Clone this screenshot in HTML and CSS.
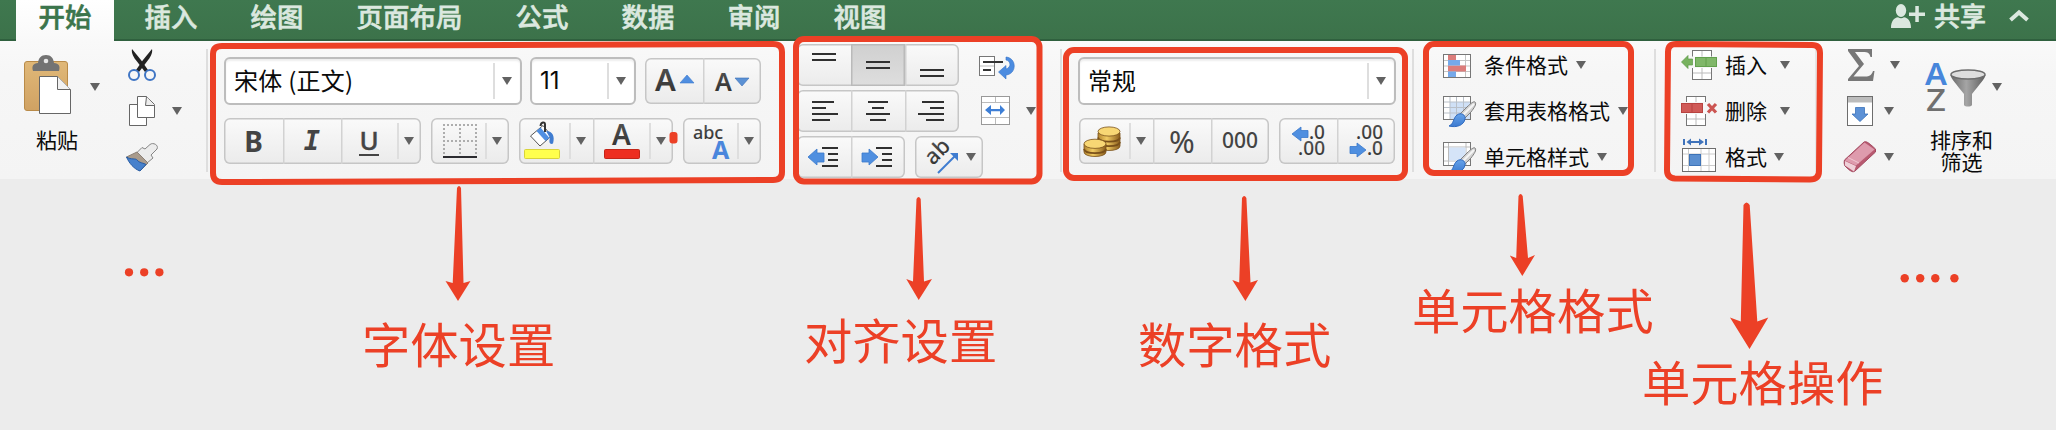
FILE: index.html
```html
<!DOCTYPE html>
<html lang="zh-CN">
<head>
<meta charset="utf-8">
<title>开始</title>
<link rel="stylesheet" href="styles.css">
</head>
<body>
<svg class="defs" width="0" height="0">
  <defs>
    <linearGradient id="gold" x1="0" x2="1" y1="0" y2="0"><stop offset="0" stop-color="#b3852f"/><stop offset=".4" stop-color="#f1cb62"/><stop offset="1" stop-color="#8a5d1c"/></linearGradient>
    <linearGradient id="wood" x1="0" x2="0" y1="0" y2="1"><stop offset="0" stop-color="#e0b878"/><stop offset="1" stop-color="#d0a263"/></linearGradient>
    <linearGradient id="steel" x1="0" x2="1" y1="0" y2="0"><stop offset="0" stop-color="#696969"/><stop offset=".45" stop-color="#a5a5a5"/><stop offset="1" stop-color="#5e5e5e"/></linearGradient>
    <linearGradient id="blue" x1="0" x2="0" y1="0" y2="1"><stop offset="0" stop-color="#66a3ea"/><stop offset="1" stop-color="#3c7ad0"/></linearGradient>
    <linearGradient id="dark" x1="0" x2="0" y1="0" y2="1"><stop offset="0" stop-color="#5a5a5a"/><stop offset="1" stop-color="#2c2c2c"/></linearGradient>
    <symbol id="caret" viewBox="0 0 10 8"><path d="M0 0H10L5 8Z" fill="#626262"/></symbol>
    <symbol id="brush" viewBox="0 0 30 28">
      <path d="M28 2C30 4 27 8 24 12L18 18L13 14L20 7C24 3 27 1 28 2Z" fill="#d2d2d2" stroke="#808080"/>
      <path d="M27 4L16 15" stroke="#f5f5f5" stroke-width="2"/>
      <path d="M10 15C14 12 19 15 18 19C17 25 10 28 2 26C7 24 6 18 10 15Z" fill="url(#blue)" stroke="#2f6abf"/>
    </symbol>
  </defs>
</svg>

<header class="titlebar">
  <nav class="tabs">
    <span class="tab active">开始</span>
    <span class="tab">插入</span>
    <span class="tab">绘图</span>
    <span class="tab">页面布局</span>
    <span class="tab">公式</span>
    <span class="tab">数据</span>
    <span class="tab">审阅</span>
    <span class="tab">视图</span>
  </nav>
  <div class="share">
    <svg width="35" height="26" viewBox="1892 3 35 26" fill="#dbe8df"><ellipse cx="1902" cy="10.500" rx="5.200" ry="6.500"/><path d="M1892 28C1892 21 1895 18 1899 17.300C1901 18.500 1903 18.500 1905 17.300C1909 18 1912 21 1912 28Z"/><path d="M1910 12.500H1916.300V6H1919.800V12.500H1926V16H1919.800V22H1916.300V16H1910Z"/></svg>
    <span class="share-text">共享</span>
    <svg class="chevron" width="22" height="16" viewBox="0 0 22 16"><path d="M2.500 12L11 4.500L19.500 12" fill="none" stroke="#dbe8df" stroke-width="4"/></svg>
  </div>
</header>

<main class="ribbon">
  <section class="clipboard">
    <div class="paste">
      <div class="paste-row">
        <svg width="48" height="60" viewBox="24 55 48 60">
          <rect x="24.500" y="61.500" width="43" height="49" rx="2.500" fill="url(#wood)" stroke="#b98b49"/>
          <path d="M33 71C31.500 66 33 63.500 38 63C38.500 58 41 55 46 55S53.500 58 54 63C59 63.500 60.500 66 59 71Z" fill="#737373"/><circle cx="46" cy="61" r="2.300" fill="#e8e8e8"/>
          <path d="M39.500 76.500H57.500L70.500 89.500V113.500H39.500Z" fill="#fff" stroke="#666"/><path d="M57.500 76.500V89.500H70.500" fill="#f1f1f1" stroke="#666"/>
        </svg>
        <svg class="caret"><use href="#caret"/></svg>
      </div>
      <div class="big-label">粘贴</div>
    </div>
    <div class="stack">
      <div class="line"><svg width="34" height="46" viewBox="126 42 34 46"><path d="M132 49C131 53 134 58 137 61.500L145 72L148 70L141 60Z" fill="#222"/><path d="M152 49C153 53 150 58 147 61.500L139 72L136 70L143 60Z" fill="#222"/><circle cx="134" cy="75" r="5" fill="#f7f7f7" stroke="#3f75c4" stroke-width="2"/><circle cx="150" cy="75" r="5" fill="#f7f7f7" stroke="#3f75c4" stroke-width="2"/></svg></div>
      <div class="line"><svg width="46" height="46" viewBox="126 88 46 46" fill="#fff" stroke="#666"><path d="M129.500 104.500H146.500V125.500H129.500Z"/><path d="M137.500 96.500H146.500L154.500 104.500V117.500H137.500Z"/><path d="M146.500 96.500L145.500 105.500L154.500 105.500" fill="#eee"/></svg><svg class="caret"><use href="#caret"/></svg></div>
      <div class="line"><svg width="34" height="46" viewBox="126 134 34 46"><path d="M145 149L150 144.500C153 142 159 145 157 149L151 155L153 158L147 163L137 152.500L142 147.500Z" fill="#ececec" stroke="#858585"/><path d="M137 152L148 163L140 171L126.500 157Z" fill="#a99b8c" stroke="#8b8077"/><path d="M126.500 157C131 160 136 158 137 160C139 163 144 163 146 164.500L140 171C134 169 129 163 126.500 157Z" fill="#4781cc" stroke="#285ca3"/></svg></div>
    </div>
  </section>
  <i class="sep"></i>

  <section class="controls font">
    <div class="row top">
      <div class="select family"><span>宋体 (正文)</span><b class="drop"><svg class="caret"><use href="#caret"/></svg></b></div>
      <div class="select size"><span>11</span><b class="drop"><svg class="caret"><use href="#caret"/></svg></b></div>
      <div class="buttons grow">
        <div class="cell w58"><svg width="58" height="46" viewBox="645 58 58 46"><text x="655" y="90.500" class="glyph" font-size="31" font-weight="600">A</text><path d="M680 83H694L687 75Z" fill="#4f8ee0" stroke="#3b78cc" stroke-width=".6"/></svg></div>
        <div class="cell w58"><svg width="58" height="46" viewBox="703 58 58 46"><text x="715" y="90.500" class="glyph" font-size="25" font-weight="600">A</text><path d="M735 78H749L742 86Z" fill="#5b91d4" stroke="#3b6fb6" stroke-width=".6"/></svg></div>
      </div>
    </div>
    <div class="row">
      <div class="buttons">
        <div class="cell w59 bold">B</div>
        <div class="cell w58 italic">I</div>
        <div class="cell w56"><span class="under">U</span></div><b class="drop"><svg class="caret"><use href="#caret"/></svg></b>
      </div>
      <div class="buttons">
        <div class="cell w54"><svg width="54" height="46" viewBox="431 118 54 46"><path d="M443 125H478M443 141H478M444 124V155M460 124V155M476 124V155" fill="none" stroke="#adadad" stroke-width="2" stroke-dasharray="2 2"/><path d="M443 157H477" stroke="#2b2b30" stroke-width="2"/></svg></div><b class="drop"><svg class="caret"><use href="#caret"/></svg></b>
      </div>
      <div class="buttons">
        <div class="cell w50"><svg width="50" height="46" viewBox="519 118 50 46"><path d="M530.500 136L543 125.500L551.500 136L540 146Z" fill="#fff" stroke="#555"/><path d="M536.500 131L540.500 127.500L549.500 138L545.500 141Z" fill="#4f8fe2"/><path d="M545 132V124.500C545 121.500 541 121.500 540.500 126" fill="none" stroke="#333" stroke-width="2"/><path d="M546 131C553 131 555 137 553 143.500C550 145 548.500 142 550 138Z" fill="#3f7cd0"/><rect x="524.500" y="149.500" width="35" height="9" rx="1" fill="#ffff4d" stroke="#d8d33c"/></svg></div><b class="drop"><svg class="caret"><use href="#caret"/></svg></b>
        <div class="cell w56 lined"><svg width="56" height="46" viewBox="593 118 56 46"><text x="612" y="145" class="glyph" font-size="28" font-weight="600">A</text><rect x="604.500" y="149.500" width="35" height="9" rx="1" fill="#ed2e20" stroke="#c22519"/></svg></div><b class="drop"><svg class="caret"><use href="#caret"/></svg></b>
      </div>
      <div class="buttons">
        <div class="cell w54"><svg width="54" height="46" viewBox="683 118 54 46"><text x="693" y="139" class="glyph" font-size="18" font-weight="500" textLength="30">abc</text><text x="712" y="159" class="sans" font-size="25" font-weight="700" fill="#4a86dc">A</text></svg></div><b class="drop"><svg class="caret"><use href="#caret"/></svg></b>
      </div>
    </div>
  </section>

  <section class="align">
    <div class="row">
      <div class="buttons low">
        <div class="cell w54"><svg class="bars" width="54" height="42" viewBox="797 44 54 42"><path d="M812 54H836M812 60H836"/></svg></div>
        <div class="cell w54 pressed"><svg class="bars" width="54" height="42" viewBox="851 44 54 42"><path d="M866 62H890M866 68H890"/></svg></div>
        <div class="cell w54"><svg class="bars" width="54" height="42" viewBox="905 44 54 42"><path d="M920 70H944M920 76H944"/></svg></div>
      </div>
      <svg width="60" height="42" viewBox="969 44 60 42"><rect x="979.500" y="56.500" width="15" height="19" fill="#fff" stroke="#777"/><path d="M980 66H994" stroke="#bbb"/><path d="M983 62H1003M983 70H991" stroke="#333" stroke-width="2"/><path d="M1006 57C1017 58 1017 74 1006 75V79L998.500 72L1006 65.500V69C1011.500 67.500 1011 61 1006 60Z" fill="#4c8ce0" stroke="#3673c8" stroke-width=".6"/></svg>
    </div>
    <div class="row">
      <div class="buttons low">
        <div class="cell w54"><svg class="bars" width="54" height="42" viewBox="797 90 54 42"><path d="M812 102H834M812 108H826M812 114H838M812 120H830"/></svg></div>
        <div class="cell w54"><svg class="bars" width="54" height="42" viewBox="851 90 54 42"><path d="M868 102H888M872 108H884M866 114H890M870 120H886"/></svg></div>
        <div class="cell w54"><svg class="bars" width="54" height="42" viewBox="905 90 54 42"><path d="M922 102H944M930 108H944M918 114H944M926 120H944"/></svg></div>
      </div>
      <svg width="57" height="42" viewBox="969 90 57 42"><rect x="981.500" y="96.500" width="28" height="28" fill="#fff" stroke="#999"/><path d="M982 102.500H1009M982 117.500H1009M995.500 97V102M995.500 118V124" stroke="#bbb"/><path d="M985 110L991 105V109H1000V105L1005 110L1000 115V111.200H991V115Z" fill="#3e7fd6"/></svg>
      <svg class="caret"><use href="#caret"/></svg>
    </div>
    <div class="row">
      <div class="buttons low">
        <div class="cell w54"><svg class="bars" width="54" height="42" viewBox="797 136 54 42"><path d="M822 148H838M828 154H838M828 160H838M822 166H838"/><path class="arrow" d="M808 157L817 149V153H824V162H817V165Z"/></svg></div>
        <div class="cell w54"><svg class="bars" width="54" height="42" viewBox="851 136 54 42"><path d="M876 148H892M882 154H892M882 160H892M876 166H892"/><path class="arrow" d="M878 157L869 149V153H862V162H869V165Z"/></svg></div>
      </div>
      <div class="buttons low angle">
        <svg width="48" height="42" viewBox="915 136 48 42"><text transform="translate(933 166) rotate(-45)" class="glyph" font-size="22" font-weight="500">ab</text><path d="M938 173L955 156" stroke="#3f7cd0" stroke-width="2"/><path d="M950 153H958V161Z" fill="#3f7cd0"/></svg>
        <svg class="caret"><use href="#caret"/></svg>
      </div>
    </div>
  </section>
  <i class="sep"></i>

  <section class="controls number">
    <div class="row top">
      <div class="select format"><span>常规</span><b class="drop"><svg class="caret"><use href="#caret"/></svg></b></div>
    </div>
    <div class="row inset">
      <div class="buttons">
        <div class="cell w50"><svg width="50" height="46" viewBox="1079 118 50 46">
          <g stroke="#79501a" stroke-width=".8"><path d="M1098 133V146C1098 152 1120 152 1120 146V133Z" fill="url(#gold)"/><path d="M1098 137.500C1099 143 1119 143 1120 137.500M1098 142C1099 147.500 1119 147.500 1120 142" fill="none" stroke-width="1.800"/><ellipse cx="1109" cy="131.500" rx="11" ry="4.600" fill="#f8d774"/><path d="M1084 144V152C1084 158 1106 158 1106 152V144Z" fill="url(#gold)"/><path d="M1084 149C1085 154.500 1105 154.500 1106 149" fill="none" stroke-width="1.800"/><ellipse cx="1095" cy="143.800" rx="11" ry="4.600" fill="#f8d774"/></g></svg></div><b class="drop"><svg class="caret"><use href="#caret"/></svg></b>
        <div class="cell w58 lined percent">%</div>
        <div class="cell w58 zeros">000</div>
      </div>
      <div class="buttons">
        <div class="cell w58"><svg width="58" height="46" viewBox="1279 118 58 46"><text x="1325" y="138.500" text-anchor="end" class="glyph decimals">.0</text><text x="1325" y="155" text-anchor="end" class="glyph decimals">.00</text><path class="arrow" d="M1292 134L1301 127V130.500H1308V137.500H1301V141Z"/></svg></div>
        <div class="cell w58"><svg width="58" height="46" viewBox="1337 118 58 46"><text x="1383" y="138.500" text-anchor="end" class="glyph decimals">.00</text><text x="1383" y="155" text-anchor="end" class="glyph decimals">.0</text><path class="arrow" d="M1366 150L1357 143V146.500H1350V153.500H1357V157Z"/></svg></div>
      </div>
    </div>
  </section>
  <i class="sep"></i>

  <section class="stack styles">
    <div class="line"><svg width="41" height="46" viewBox="1443 42 41 46"><rect x="1443.500" y="54.500" width="27" height="23" fill="#fff"/><path d="M1444 60.500H1470M1444 66H1470M1444 71.500H1470M1448.500 55V77M1465.500 55V77" stroke="#c5c5c5"/><path d="M1448 55H1456V60H1448ZM1448 65.500H1466V71.500H1448Z" fill="#dc7d7b"/><path d="M1448 60H1460V65.500H1448ZM1448 71.500H1456V77H1448Z" fill="#75a9ea"/><rect x="1443.500" y="54.500" width="27" height="23" fill="none" stroke="#777"/></svg><span>条件格式</span><svg class="caret"><use href="#caret"/></svg></div>
    <div class="line"><svg width="41" height="46" viewBox="1443 88 41 46"><rect x="1443.500" y="96.500" width="27" height="23" fill="#fff" stroke="#777"/><path d="M1450 102H1470V119H1450Z" fill="#cfe0f6"/><path d="M1444 102H1470M1444 107.500H1470M1444 113H1470M1450 97V119M1456.500 97V119M1463.500 97V119" stroke="#b9c0c9"/><use href="#brush" x="1447" y="100" width="30" height="28"/></svg><span>套用表格格式</span><svg class="caret"><use href="#caret"/></svg></div>
    <div class="line"><svg width="41" height="46" viewBox="1443 134 41 46"><rect x="1443.500" y="142.500" width="27" height="23" fill="#fff" stroke="#777"/><path d="M1444 147H1470M1444 161H1470M1448.500 143V165M1466 143V165" stroke="#bbb"/><path d="M1449 147.500H1465.500V160.500H1449Z" fill="#d5e4f8"/><use href="#brush" x="1447" y="146" width="30" height="28"/></svg><span>单元格样式</span><svg class="caret"><use href="#caret"/></svg></div>
  </section>
  <i class="sep"></i>

  <section class="stack cells">
    <div class="line"><svg width="44" height="46" viewBox="1681 42 44 46"><rect x="1692.500" y="50.500" width="19" height="29" fill="#fff" stroke="#777"/><path d="M1702 51V79M1693 73H1711" stroke="#bbb"/><path d="M1690 56.500H1718V68H1690Z" fill="#f6f6f6"/><rect x="1695.500" y="57.500" width="21" height="9" fill="#80b769" stroke="#62a04d"/><path d="M1706 58V66" stroke="#62a04d"/><path d="M1681.500 62L1688 55.500V59H1692.500V65H1688V68.500Z" fill="#77b25f" stroke="#5d9a49" stroke-width=".7"/></svg><span>插入</span><svg class="caret"><use href="#caret"/></svg></div>
    <div class="line"><svg width="44" height="46" viewBox="1681 88 44 46"><rect x="1686.500" y="96.500" width="19" height="29" fill="#fff" stroke="#777"/><path d="M1696 97V125M1687 119H1705" stroke="#bbb"/><path d="M1681 102H1706V114H1681Z" fill="#f6f6f6"/><rect x="1681.500" y="103.500" width="21" height="9" fill="#d05a57" stroke="#b84340"/><path d="M1692 104V112" stroke="#b84340"/><path d="M1708 104L1716 112.500M1716 104L1708 112.500" stroke="#cc5552" stroke-width="3.200"/></svg><span>删除</span><svg class="caret"><use href="#caret"/></svg></div>
    <div class="line tight"><svg width="44" height="46" viewBox="1681 134 44 46"><path d="M1684 139V145M1706 139V145M1688 142H1702" stroke="#3f73bb" stroke-width="2"/><path d="M1686.500 142L1691 138.500V145.500ZM1704 142L1699 138.500V145.500Z" fill="#3f73bb"/><rect x="1682.500" y="148.500" width="33" height="23" fill="#fff" stroke="#6d6d6d"/><path d="M1683 154H1715M1683 165.500H1715M1688.500 149V171M1701 149V171M1709 149V171" stroke="#ccc"/><rect x="1689.500" y="154.500" width="11" height="11" fill="#5b8fd0" stroke="#3e73b7"/></svg><span>格式</span><svg class="caret"><use href="#caret"/></svg></div>
  </section>
  <i class="sep faint"></i>

  <section class="editing">
    <div class="stack">
      <div class="line"><svg width="48" height="46" viewBox="1842 42 48 46"><path d="M1848 49H1872V57H1870.500C1869.500 53 1868 52 1863 52H1855L1864 64L1853.500 76.500H1865C1870 76.500 1871.500 75 1873 71H1874.500L1873 81H1848V79L1859 66L1848 51Z" fill="#777"/></svg><svg class="caret"><use href="#caret"/></svg></div>
      <div class="line"><svg width="42" height="46" viewBox="1842 88 42 46"><rect x="1847.500" y="96.500" width="25" height="29" fill="#fff" stroke="#6d6d6d"/><path d="M1848 97H1872V102.500H1848Z" fill="#bcbcbc"/><path d="M1855.500 107.500H1864.500V114H1868L1860 121.500L1852 114H1855.500Z" fill="#5c91d6" stroke="#3b72ba" stroke-width=".8"/></svg><svg class="caret"><use href="#caret"/></svg></div>
      <div class="line"><svg width="42" height="46" viewBox="1842 134 42 46"><path d="M1844.500 160L1864 142C1866 141 1868 142 1875.500 149V152L1855 171C1853 172.500 1851 172 1845 166C1844 164 1844 162 1844.500 160Z" fill="#b85970" stroke="#a34a60"/><path d="M1845 160.500L1864.500 142.500L1874.500 149.500L1856 165.500Z" fill="#de9bad"/><path d="M1845 161L1856 166L1854 171.500L1845 165.500Z" fill="#efd0d8"/><path d="M1848 157.500L1859 163" stroke="#f0c8d2"/></svg><svg class="caret"><use href="#caret"/></svg></div>
    </div>
    <div class="sort">
      <div class="sort-row">
        <svg width="68" height="56" viewBox="1922 60 68 56"><text x="1925" y="85" class="sans" font-size="30" font-weight="600" fill="#4786db" textLength="22" lengthAdjust="spacingAndGlyphs">A</text><text x="1926" y="111" class="sans" font-size="30" font-weight="500" fill="#707070" textLength="20" lengthAdjust="spacingAndGlyphs">Z</text><path d="M1950.500 75C1950.500 78 1957 85 1964 94V105C1965 107 1971 107 1972 105V94C1979 85 1985.500 78 1985.500 75Z" fill="url(#steel)"/><ellipse cx="1968" cy="74.500" rx="17" ry="4.500" fill="#ddd" stroke="#6d6d6d" stroke-width="1.500"/></svg>
        <svg class="caret"><use href="#caret"/></svg>
      </div>
      <div class="big-label">排序和<br>筛选</div>
    </div>
  </section>
</main>

<div class="notes">
  <svg width="2056" height="430" viewBox="0 0 2056 430">
    <g fill="none" stroke="#ec4026" stroke-width="6" stroke-linejoin="round">
      <path d="M222 46L773 44Q782 44 782 52V172Q782 180 773 180L222 182Q213 182 213 173V54Q213 46 222 46Z"/>
      <rect x="796" y="39" width="243.500" height="142.500" rx="8"/>
      <rect x="1066" y="50" width="339" height="128" rx="8"/>
      <rect x="1426" y="44" width="205" height="129" rx="8"/>
      <path d="M1676 44L1812 45Q1820 45 1820 53L1819 171Q1819 179.500 1810 179.500L1675 178.500Q1667 178 1667 170L1668 52Q1668 44 1676 44Z"/>
    </g>
    <g fill="#ec4026">
      <path d="M457 188Q459 184 461 188L463.500 283L470.500 281L458 301L445.500 281L452.700 283Z"/>
      <path d="M916.500 199Q918.600 195 920.700 199L924 281.500L932 279L918.700 300L906.300 279L913 281.500Z"/>
      <path d="M1242 198Q1244.200 194 1246.400 198L1250.500 282.500L1258 280L1245.400 301L1232.300 280L1239.200 282.500Z"/>
      <path d="M1518.500 196Q1520.500 192 1522.700 196L1528 258L1535 255L1522.300 276L1509.800 255.500L1516.200 258Z"/>
      <path d="M1743.500 205Q1746.500 200 1749.700 205L1757.300 321.500L1768.300 317.500L1749.500 349L1730 317.500L1740.800 321.500Z"/>
      <circle cx="129" cy="272.300" r="4.100"/><circle cx="144.200" cy="272.300" r="4.100"/><circle cx="159.400" cy="272.300" r="4.100"/>
      <circle cx="1904.700" cy="278.300" r="4.200"/><circle cx="1920.200" cy="278.300" r="4.200"/><circle cx="1935.300" cy="278.300" r="4.200"/><circle cx="1954.400" cy="278.300" r="4.200"/>
      <rect x="669.500" y="132" width="8" height="11.500" rx="3"/>
    </g>
    <g class="captions">
      <text x="362" y="363">字体设置</text>
      <text x="804" y="358.500">对齐设置</text>
      <text x="1138" y="363">数字格式</text>
      <text x="1412" y="329">单元格格式</text>
      <text x="1642" y="401">单元格操作</text>
    </g>
  </svg>
</div>
</body>
</html>
```
FILE: styles.css
```css
* { box-sizing: border-box; }
body {
  margin: 0;
  height: 430px;
  overflow: hidden;
  position: relative;
  background: #ececec;
  color: #0a0a0a;
  font-family: "Noto Sans CJK SC", sans-serif;
}
svg { display: block; flex: none; }
.defs { position: absolute; }
.caret { width: 10px; height: 8px; }

.titlebar {
  display: flex;
  justify-content: space-between;
  height: 41px;
  padding: 0 26px 0 16px;
  background: linear-gradient(#3f784f, #3c724a);
  box-shadow: inset 0 -2px #2f603e;
}
.tabs { display: flex; }
.tab {
  padding: 0 26.5px;
  height: 41px;
  font-size: 26.4px;
  line-height: 32px;
  font-weight: 500;
  letter-spacing: .1px;
  color: #dbe8df;
  -webkit-text-stroke: .6px;
}
.tab.active {
  width: 98px;
  margin-right: 4px;
  padding: 0;
  text-align: center;
  background: linear-gradient(#fff, #f9f9f9);
  color: #3b754c;
}
.share { display: flex; align-items: center; height: 32px; color: #dbe8df; }
.share-text { margin: -2px 0 0 8px; font-size: 26px; font-weight: 500; line-height: 32px; -webkit-text-stroke: .6px; }
.chevron { margin-left: 22px; }

.ribbon {
  display: flex;
  height: 138px;
  background: linear-gradient(#f9f9f9, #f6f6f6 34px, #f4f4f4);
}
.sep { width: 2px; height: 123px; margin-top: 8px; background: #dedede; flex: none; }
.faint { background: #e6e6e6; }

.stack { padding-top: 1px; flex: none; }
.line { display: flex; align-items: center; height: 46px; font-size: 21px; white-space: nowrap; }
.line span { line-height: 30px; margin-top: -2px; }
.big-label { text-align: center; font-size: 21px; line-height: 22px; }

.clipboard { display: flex; width: 206px; }
.paste { width: 126px; padding-top: 14px; }
.paste-row { display: flex; align-items: center; gap: 18px; padding-left: 24px; }
.paste-row .caret { margin-top: 4px; }
.paste .big-label { width: 114px; margin-top: 13px; }

.controls { padding-top: 16px; flex: none; }
.row { display: flex; align-items: center; gap: 10px; }
.controls .row.top { height: 48px; margin-bottom: 13px; gap: 8px; }
.font { width: 537px; margin-left: 16px; }
.number { width: 318px; margin: 0 16px; }
.inset { padding-left: 1px; }
.grow { margin-left: 1px; }

.select {
  display: flex;
  align-items: center;
  justify-content: space-between;
  height: 48px;
  border: 2px solid #bdbdbd;
  border-radius: 6px;
  background: #fff;
  box-shadow: inset 0 2px 2px #eee;
  font-size: 24px;
  line-height: 38px;
}
.select span { padding-left: 8px; margin-top: -2px; white-space: nowrap; }
.family { width: 298px; }
.family span { letter-spacing: .25px; }
.size { width: 106px; }
.size span { font-family: Inter, sans-serif; margin-top: 0; }
.format { width: 318px; }
.drop {
  width: 24px;
  height: 36px;
  display: flex;
  align-items: center;
  justify-content: center;
  flex: none;
  box-shadow: inset 2px 0 #dedede;
}
.select .drop { width: 27px; }

.buttons {
  display: flex;
  align-items: center;
  height: 46px;
  border-radius: 6px;
  background: linear-gradient(#fafafa, #ebebeb);
  box-shadow: inset 0 0 0 1.500px #c6c6c6;
}
.cell {
  height: 46px;
  display: flex;
  align-items: center;
  justify-content: center;
  flex: none;
  color: #444;
  line-height: 40px;
  font-family: "Noto Sans", sans-serif;
}
.cell + .cell, .lined { box-shadow: inset 1.500px 0 #d2d2d2; }
.w50 { width: 50px; }
.w54 { width: 54px; }
.w56 { width: 56px; }
.w58 { width: 58px; }
.w59 { width: 59px; }
.bold { font-size: 28px; font-weight: 700; }
.italic { font-family: "DejaVu Sans Mono", monospace; font-size: 27px; font-weight: 700; font-style: italic; }
.under { font-size: 26px; font-weight: 500; line-height: 27px; border-bottom: 2px solid #444; -webkit-text-stroke: .4px; }
.percent { font-size: 31px; }
.zeros { font-size: 21px; font-weight: 500; padding-bottom: 2px; }
.glyph { font-family: "Noto Sans", sans-serif; fill: url(#dark); }
.decimals { font-size: 19px; font-weight: 500; }
.sans { font-family: "Noto Sans", sans-serif; }

.align { width: 263px; margin-left: 36px; padding-top: 3px; flex: none; }
.align .row { height: 42px; margin-bottom: 4px; }
.align .row > .caret { margin-left: -10px; }
.low, .low .cell { height: 42px; }
.angle { width: 68px; }
.angle .caret { margin-left: 3px; }
.pressed { background: linear-gradient(#d0d0d0, #dedede); box-shadow: inset 0 0 0 1.500px #bababa !important; }
.bars { fill: none; stroke: #303030; stroke-width: 2; }
.arrow { fill: #4f8fe0; stroke: #3a78cc; stroke-width: .8; }

.styles { width: 240px; padding-left: 29px; }
.styles .caret { margin-left: 8px; }
.cells { width: 159px; padding-left: 25px; }
.cells .caret { margin-left: 13px; }
.cells .tight .caret { margin-left: 7px; }

.editing { display: flex; padding-left: 25px; }
.sort { margin-left: 22px; width: 90px; padding-top: 19px; margin-right: auto; }
.editing > .stack { width: 58px; }
.sort-row { display: flex; align-items: center; gap: 2px; }
.sort-row .caret { margin-top: -2px; }
.sort .big-label { width: 79px; margin-top: 12px; }

.notes { position: absolute; left: 0; top: 0; }
.captions { fill: #ec4026; font-size: 48.300px; font-family: "Noto Sans CJK SC", sans-serif; }
```
